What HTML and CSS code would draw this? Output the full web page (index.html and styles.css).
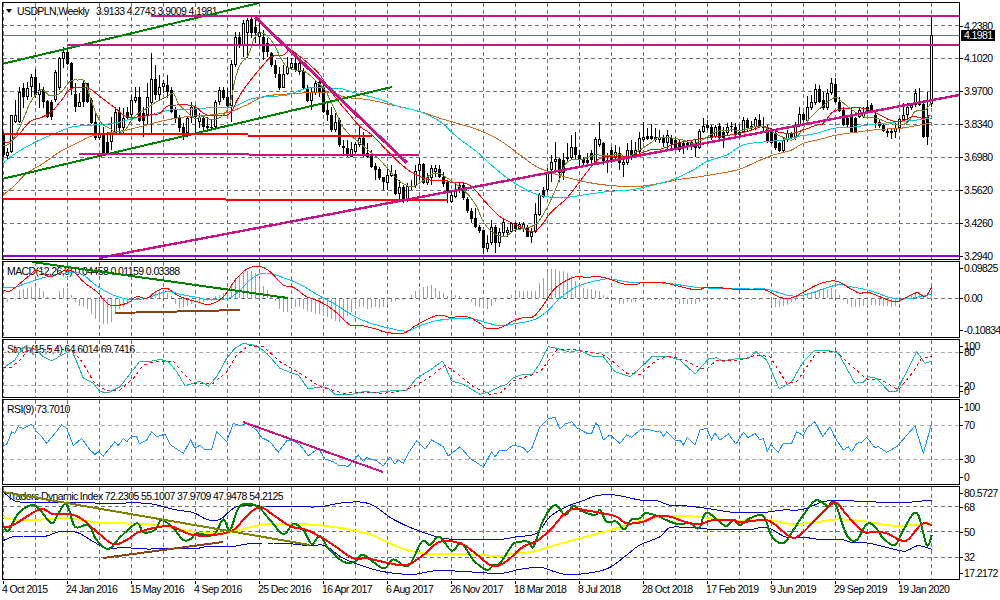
FILE: index.html
```html
<!DOCTYPE html>
<html lang="en">

<head>
    <meta charset="utf-8">
    <title>USDPLN,Weekly</title>
    <link rel="stylesheet" href="styles.css">
</head>

<body>
    <div id="chart">
        <div class="pane" id="main-pane">
            <div class="plot">
                <div class="legend legend-main"><span class="arrow"></span><span>USDPLN,Weekly</span><span class="ohlc">3.9133 4.2743 3.9009 4.1981</span></div>
                <svg id="main"></svg>
            </div>
            <div class="axis" id="main-axis"></div>
        </div>
        <div class="pane" id="macd-pane">
            <div class="plot">
                <div class="legend">MACD(12,26,9) 0.04458 0.01159 0.03388</div>
                <svg id="macd"></svg>
            </div>
            <div class="axis" id="macd-axis"></div>
        </div>
        <div class="pane" id="stoch-pane">
            <div class="plot">
                <div class="legend">Stoch(15,5,4) 64.6014 69.7416</div>
                <svg id="stoch"></svg>
            </div>
            <div class="axis" id="stoch-axis"></div>
        </div>
        <div class="pane" id="rsi-pane">
            <div class="plot">
                <div class="legend">RSI(9) 73.7010</div>
                <svg id="rsi"></svg>
            </div>
            <div class="axis" id="rsi-axis"></div>
        </div>
        <div class="pane" id="tdi-pane">
            <div class="plot">
                <div class="legend">Traders Dynamic Index 72.2305 55.1007 37.9709 47.9478 54.2125</div>
                <svg id="tdi"></svg>
            </div>
            <div class="axis" id="tdi-axis"></div>
        </div>
        <div id="dates">
            <span class="date">4 Oct 2015</span>
            <span class="date">24 Jan 2016</span>
            <span class="date">15 May 2016</span>
            <span class="date">4 Sep 2016</span>
            <span class="date">25 Dec 2016</span>
            <span class="date">16 Apr 2017</span>
            <span class="date">6 Aug 2017</span>
            <span class="date">26 Nov 2017</span>
            <span class="date">18 Mar 2018</span>
            <span class="date">8 Jul 2018</span>
            <span class="date">28 Oct 2018</span>
            <span class="date">17 Feb 2019</span>
            <span class="date">9 Jun 2019</span>
            <span class="date">29 Sep 2019</span>
            <span class="date">19 Jan 2020</span>
        </div>
    </div>

    <script src="chart.js"></script>
</body>

</html>
```

FILE: styles.css
```css
html,
body {
    width: 100%;
    height: 100%;
    margin: 0;
    padding: 0;
    background: #fff;
}

#chart {
    display: flex;
    flex-direction: column;
    gap: 1px;
    padding: 2px 0 0 2px;
    font-family: "Liberation Sans", Arial, sans-serif;
    font-size: 10.5px;
    letter-spacing: -0.6px;
    color: #000;
}

.pane {
    display: flex;
}

#main-pane {
    height: 258px;
}

#macd-pane {
    height: 77px;
}

#stoch-pane {
    height: 59px;
}

#rsi-pane {
    height: 86px;
}

#tdi-pane {
    height: 94px;
}

.plot {
    position: relative;
    box-sizing: border-box;
    width: 958px;
    height: 100%;
    border: 1px solid #000;
    overflow: hidden;
}

.plot svg {
    display: block;
    position: relative;
    z-index: 1;
    width: 100%;
    height: 100%;
    shape-rendering: crispEdges;
}

.legend {
    position: absolute;
    top: 3px;
    left: 4px;
    line-height: 12px;
    white-space: nowrap;
}

.legend-main {
    display: flex;
    align-items: center;
    top: 2px;
}

.arrow {
    width: 0;
    height: 0;
    margin: 0 5px 0 -1px;
    border-style: solid;
    border-width: 4px 3.5px 0 3.5px;
    border-color: #000 transparent transparent transparent;
}

.ohlc {
    margin-left: 7px;
}

.axis {
    position: relative;
    flex: 1;
}

.tick {
    position: absolute;
    left: 4px;
    line-height: 10px;
    white-space: nowrap;
}

.tick::before {
    content: "";
    position: absolute;
    top: 5px;
    left: -4px;
    width: 3px;
    height: 1px;
    background: #000;
}

.tick.current {
    left: 1px;
    padding: 0 2px 0 3px;
    line-height: 11px;
    background: #000;
    color: #fff;
}

.tick.current::before {
    display: none;
}

#dates {
    display: flex;
}

.date {
    flex: 0 0 64px;
    line-height: 11px;
    white-space: nowrap;
}

.date::before {
    content: "";
    display: block;
    width: 1px;
    height: 3px;
    margin-left: 1px;
    background: #000;
}
```

FILE: chart.js
```js
// all chart data was read off at 3x, so [x, y] pairs are in 1/3 px from a crop origin
const NS = "http://www.w3.org/2000/svg";
const STEP = 4;
const FIRST_X = 3;

const GRID = "#667788";
const LEVEL = "#a9a9a9";
const GREEN = "#008000";
const MAGENTA = "#c71585";
const RED = "#ff0000";
const BROWN = "#8b4513";

function crop(ox, oy, flat) {
    const out = [];
    for (let i = 0; i < flat.length; i += 2) {
        out.push([ox + flat[i] / 3, oy + flat[i + 1] / 3]);
    }
    return out;
}

// catmull-rom through the read-off points, the averages are not angular
function smooth(pts) {
    const out = [];
    for (let i = 0; i < pts.length - 1; i++) {
        const p0 = pts[Math.max(i - 1, 0)];
        const p1 = pts[i];
        const p2 = pts[i + 1];
        const p3 = pts[Math.min(i + 2, pts.length - 1)];
        for (let s = 0; s < 6; s++) {
            const t = s / 6;
            out.push([0, 1].map(n => 0.5 * (2 * p1[n] + (p2[n] - p0[n]) * t
                + (2 * p0[n] - 5 * p1[n] + 4 * p2[n] - p3[n]) * t * t
                + (3 * p1[n] - p0[n] - 3 * p2[n] + p3[n]) * t * t * t)));
        }
    }
    out.push(pts[pts.length - 1]);
    return out;
}

function el(parent, name, attrs) {
    const node = document.createElementNS(NS, name);
    for (const key in attrs) {
        node.setAttribute(key, attrs[key]);
    }
    parent.appendChild(node);
    return node;
}

function line(svg, color, width, pts, dash) {
    const attrs = {
        points: pts.map(p => p[0].toFixed(1) + "," + p[1].toFixed(1)).join(" "),
        fill: "none",
        stroke: color,
        "stroke-width": width,
    };
    if (dash) {
        attrs["stroke-dasharray"] = dash;
    }
    el(svg, "polyline", attrs);
}

// svg units are page pixels, whatever pane it is
function setup(id, levels, levelColor) {
    const svg = document.getElementById(id);
    const box = svg.getBoundingClientRect();
    svg.setAttribute("viewBox", box.x + " " + box.y + " " + box.width + " " + box.height);

    for (let x = FIRST_X; x < 950; x += 32) {
        line(svg, GRID, 1, [[x + 0.5, box.y], [x + 0.5, box.bottom]], "4 3");
    }
    const axis = document.getElementById(id + "-axis");
    const axisTop = axis.getBoundingClientRect().y;
    levels.forEach(level => {
        if (level[2] !== false) {
            const y = Math.floor(level[1]) + 0.5;
            line(svg, levelColor, 1, [[box.x, y], [box.right, y]], "4 3");
        }
        const tick = document.createElement("div");
        tick.className = "tick";
        tick.textContent = level[0];
        tick.style.top = (level[1] - axisTop - 5) + "px";
        axis.appendChild(tick);
    });
    return svg;
}

/* ---- main pane ---- */

// high, body top, body bottom, low, white body
const CANDLES = [
    [395,400,465,470,0],[445,455,468,480,1],[345,345,455,460,1],[300,345,365,370,1],
    [260,275,365,370,1],[250,265,292,325,0],[245,265,292,300,1],[222,232,262,290,1],
    [208,232,285,295,0],[250,270,285,325,1],[262,270,305,325,0],[300,303,352,355,0],
    [300,305,350,360,0],[210,215,300,305,1],[170,175,265,270,1],[140,155,178,205,1],
    [145,155,192,195,0],[185,190,265,285,0],[250,282,320,335,0],[280,305,320,320,1],
    [240,250,305,320,0],[250,250,305,310,0],[295,300,370,372,0],[335,365,415,420,0],
    [370,398,415,420,1],[380,398,458,460,0],[395,425,458,460,0],[350,400,425,450,1],
    [320,335,400,405,1],[320,335,385,405,0],[325,355,385,405,1],[320,335,355,360,0],
    [285,300,345,350,1],[262,290,302,310,1],[260,290,362,365,0],[320,340,362,410,0],
    [250,290,345,375,1],[160,238,310,400,1],[195,238,285,300,0],[225,262,285,300,1],
    [240,250,262,280,1],[225,255,275,295,0],[260,270,335,340,0],[320,330,358,370,0],
    [345,355,385,395,0],[370,380,400,420,0],[350,355,400,410,1],[305,320,355,370,1],
    [315,320,350,400,0],[340,350,365,385,1],[345,355,380,395,0],[350,378,385,395,0],
    [360,380,385,390,1],[300,305,380,385,1],[260,270,305,315,1],[260,270,295,300,0],
    [265,292,318,330,0],[180,192,318,365,1],[95,110,195,200,1],[95,110,135,145,0],
    [60,68,135,170,1],[55,60,100,175,1],[50,58,100,115,0],[55,80,100,130,0],
    [70,95,112,135,1],[90,112,155,180,0],[115,130,155,170,0],[155,160,195,200,0],
    [180,195,222,235,0],[200,222,265,270,0],[195,222,265,265,1],[170,200,222,225,1],
    [175,190,205,210,1],[175,190,210,215,0],[180,190,215,225,1],[205,212,265,270,0],
    [255,265,302,305,0],[265,275,302,330,1],[240,250,280,285,1],[230,245,280,290,0],
    [250,262,335,340,0],[305,330,345,362,0],
    [320,345,390,395,0],[340,365,390,395,1],[355,360,435,440,0],[420,438,445,465,0],
    [420,445,465,470,0],[425,447,470,472,1],[425,432,455,460,1],[380,415,435,440,1],
    [395,415,465,470,0],[430,458,472,475,0],[450,462,500,505,0],[490,498,510,540,0],
    [500,507,535,540,0],[530,532,545,570,0],[505,525,548,570,1],[495,518,528,530,1],
    [510,522,582,585,0],[540,562,582,600,1],[555,560,600,608,0],[550,557,600,605,1],
    [540,558,562,570,0],[495,512,558,565,1],[475,492,512,540,1],[490,492,550,552,0],
    [520,530,548,555,1],[495,505,535,555,1],[495,505,515,530,1],[495,508,530,535,0],
    [515,530,552,560,0],[540,545,580,610,0],[570,585,605,608,1],[545,570,590,595,1],
    [550,555,570,580,0],[550,555,595,600,0],[590,597,632,640,0],[625,632,657,670,0],
    [625,655,682,685,0],[675,682,692,700,0],[690,690,745,762,0],[705,730,748,755,1],
    [660,680,730,735,1],[675,680,730,758,0],[685,695,730,740,1],[655,665,700,710,1],
    [680,690,700,710,1],[665,670,695,700,1],[665,670,688,695,0],[665,672,688,690,1],
    [665,672,688,695,1],[675,685,710,712,0],[685,695,710,730,1],[610,642,695,700,1],
    [580,585,645,648,1],[560,570,590,595,0],[505,520,570,575,1],[465,485,510,545,1],
    [425,478,485,515,1],[475,478,520,545,0],[460,480,520,540,0],[430,470,478,482,1],
    [405,440,475,480,1],[395,440,465,480,0],[450,465,478,500,0],[470,478,490,495,0],
    [460,480,490,495,0],[450,460,480,490,0],[410,418,490,495,1],[367,418,435,440,1],
    [425,430,488,495,0],[460,480,490,520,0],[440,450,480,490,0],[435,455,475,480,1],
    [440,460,490,510,0],[470,485,495,530,1],[430,450,490,495,1],[420,450,470,480,0],
    [425,450,465,470,1],[395,415,455,465,1],[367,410,420,425,1],[385,408,418,420,0],
    [372,408,418,420,0],[385,410,420,425,0],[390,410,420,430,1],
    [405,415,430,440,0],[390,405,430,450,1],[405,415,432,445,0],[410,420,445,450,0],
    [420,430,450,455,0],[425,430,445,462,0],[420,430,440,450,0],[420,425,440,450,1],
    [420,430,445,470,0],[388,392,445,448,1],[355,378,395,400,1],[360,375,383,390,0],
    [375,380,415,420,0],[375,380,410,415,1],[370,378,415,420,0],[380,395,415,445,0],
    [368,380,400,405,1],[365,378,382,395,1],[370,380,405,415,0],[375,395,405,415,1],
    [350,360,395,400,1],[355,360,385,395,0],[362,378,385,392,1],[350,358,380,390,1],
    [342,360,380,385,0],[350,378,385,395,0],[375,385,425,430,0],[385,392,430,432,0],
    [395,400,445,450,0],[425,430,452,455,0],[415,420,452,455,1],[390,400,420,425,1],
    [395,400,415,418,0],[365,375,415,420,1],[322,342,375,380,1],[335,342,360,365,0],
    [288,320,362,365,1],[285,305,325,330,1],[252,268,310,315,1],[255,268,305,310,0],
    [275,300,325,330,0],[268,278,325,330,1],[235,250,280,285,1],[235,252,305,310,0],
    [290,305,332,335,0],[322,330,375,378,0],[350,355,375,380,0],[320,345,398,400,0],
    [350,355,398,400,0],[320,330,350,355,1],[320,340,350,355,1],[300,320,332,340,0],
    [310,315,335,340,0],[335,345,370,385,0],[360,365,378,385,0],[370,375,392,395,0],
    [385,392,400,410,0],[385,392,400,418,1],[365,385,395,415,1],[355,358,385,395,1],
    [310,345,360,365,1],[310,322,345,365,1],[310,315,325,330,1],[268,280,315,320,1],
    [265,305,315,318,0],[305,312,412,415,0],[275,350,412,435,0],[48,105,312,320,1],
];

function drawCandles(svg) {
    CANDLES.forEach((c, k) => {
        const x = FIRST_X + STEP * k;
        const [high, top, bottom, low] = c.slice(0, 4).map(v => Math.round(v / 3));
        el(svg, "rect", { x: x, y: high, width: 1, height: low - high, fill: "#000" });
        el(svg, "rect", { x: x - 1, y: top, width: 3, height: Math.max(bottom - top, 1), fill: "#000" });
        if (c[4] && bottom - top > 2) {
            el(svg, "rect", { x: x, y: top + 1, width: 1, height: bottom - top - 2, fill: "#fff" });
        }
    });
}

const main = setup("main", [
    ["4.2380", 25.7], ["4.1020", 58.3], ["3.9700", 91.3], ["3.8340", 124.3],
    ["3.6980", 157.3], ["3.5620", 190.3], ["3.4260", 223.3], ["3.2940", 256],
], GRID);

line(main, GRID, 1, [[2, 35.5], [960, 35.5]]);
drawCandles(main);

line(main, "#d2691e", 1, smooth(crop(0, 0, [9,585,40,560,80,520,130,490,180,455,230,430,270,410,320,400,380,390,440,375,500,360,560,350,630,345,690,335,740,315,790,290,860,282,930,278,990,278])
    .concat(crop(330, 0, [50,292,120,300,200,318,270,335,340,358,410,378,470,400,520,428,570,465,620,500,670,520,720,535,790,550,850,557,920,560,990,550]))
    .concat(crop(660, 0, [60,538,120,530,230,510,290,485,340,465,390,452,430,430,480,418,530,405,600,395,660,388,720,385,780,375,813,368]))));
line(main, "#00ced1", 1, smooth(crop(0, 0, [9,490,40,465,80,440,130,415,190,390,220,380,280,375,340,370,400,355,450,345,510,330,570,328,640,322,700,320,750,298,800,290,860,285,920,265,970,262,990,265])
    .concat(crop(330, 0, [30,265,80,280,150,298,200,318,270,335,330,365,380,410,440,455,490,500,540,540,600,575,650,590,700,593,760,585,830,575,900,570,950,560,990,550]))
    .concat(crop(660, 0, [40,538,100,510,140,485,200,465,250,435,320,425,370,420,410,410,470,400,520,385,570,382,650,372,720,365,770,360,813,355]))));
line(main, RED, 1, smooth(crop(0, 0, [9,425,30,425,60,400,90,365,130,350,160,330,185,300,215,265,265,265,300,290,340,320,380,350,420,350,450,345,480,340,500,320,530,315,580,318,620,345,660,345,690,340,720,285,760,230,790,195,815,170,850,165,870,150,900,170,930,195,960,225,990,270])
    .concat(crop(330, 0, [30,310,60,345,90,380,120,400,150,430,180,460,210,490,250,520,300,540,345,542,370,548,400,548,430,565,470,610,510,650,545,668,580,685,610,695,635,675,665,635,710,595,745,550,780,505,810,475,850,468,900,470,960,450,990,448]))
    .concat(crop(660, 0, [50,430,100,420,150,412,210,405,260,395,310,380,350,395,395,400,430,390,470,375,490,370,520,335,560,325,610,325,650,340,690,360,720,365,760,350,790,355,810,345]))));
line(main, "#6b8e23", 1, smooth(crop(0, 0, [9,435,30,430,60,380,90,310,115,275,130,270,150,287,180,280,210,245,235,240,255,245,270,290,290,345,310,375,330,385,350,400,375,390,395,360,415,340,440,325,470,305,500,290,520,280,535,310,560,335,585,355,610,350,640,360,670,345,690,310,705,240,720,195,745,165,765,110,790,100,820,130,840,170,860,200,885,210,915,215,945,240,975,270,990,300])
    .concat(crop(330, 0, [15,330,35,375,60,405,85,425,120,455,150,480,185,520,210,545,245,560,275,545,300,525,325,520,345,530,375,550,400,570,420,590,440,620,460,665,485,695,510,708,530,708,555,690,585,685,620,670,650,625,680,560,705,495,730,478,760,478,795,465,830,468,870,462,885,475,915,460,960,430,990,412]))
    .concat(crop(660, 0, [60,418,100,430,125,420,170,395,210,390,250,390,300,378,335,395,365,410,395,420,420,400,445,360,480,325,525,292,545,305,570,325,610,350,650,355,690,370,720,375,745,365,765,335,795,330,813,310]))));

line(main, GREEN, 2, [[2, 64], [259, 3]]);
line(main, GREEN, 2, [[2, 179], [392, 87]]);
line(main, RED, 2, [[2, 134], [248, 134]]);
line(main, RED, 2, [[248, 136], [372, 136]]);
line(main, RED, 2, [[2, 199], [226, 199]]);
line(main, RED, 2, [[226, 200], [448, 200]]);
line(main, MAGENTA, 2, [[79, 154], [249, 154]]);
line(main, MAGENTA, 2, [[249, 155], [419, 155]]);
line(main, MAGENTA, 2, [[151, 16], [960, 16]]);
line(main, MAGENTA, 2, [[67, 45], [960, 45]]);
line(main, MAGENTA, 2.4, [[99, 258], [959, 95]]);
line(main, MAGENTA, 3, [[255, 17], [407, 163]]);
line(main, "#9400d3", 2, [[2, 256], [960, 256]]);

const current = document.createElement("div");
current.className = "tick current";
current.textContent = "4.1981";
current.style.top = "28px";
document.getElementById("main-axis").appendChild(current);

/* ---- MACD ---- */

const macd = setup("macd", [
    ["0.09825", 268, false], ["0.00", 298.3], ["-0.10834", 330, false],
], GRID);

const HIST = [
    -20,-10,-3,-2,25,28,30,32,35,30,22,3,0,0,20,30,30,10,-10,-20,-25,-30,-45,-60,-65,-75,-75,-70,-45,-30,
    -25,-15,-8,-3,-3,-4,0,10,20,25,22,15,5,-15,-28,-25,-20,-15,-12,-8,-8,-5,-5,5,10,15,15,40,60,70,
    75,80,80,75,60,35,25,8,-5,-30,-38,-38,-30,-25,-25,-30,-35,-40,-45,-45,-50,-55,-60,-65,-70,-60,-50,-40,-30,-25,
    -25,-30,-28,-25,-28,-25,-15,-10,-5,-3,-2,0,8,22,28,32,35,38,30,20,15,5,12,10,5,0,-3,-10,-20,-25,
    -25,-30,-20,-10,0,0,2,10,15,20,22,20,22,22,45,60,80,88,88,82,80,75,65,50,40,30,28,28,25,22,
    10,3,0,-2,-15,-15,-8,-8,-8,-2,-2,-2,-2,-2,-2,-2,-2,-2,-10,-15,-15,-15,-15,-15,-10,-2,0,-2,0,-2,
    0,-2,0,-2,0,-2,0,-2,0,-2,0,0,-20,-25,-25,-22,-18,-10,-5,0,10,15,15,22,28,28,28,30,28,10,
    -3,-15,-25,-25,-25,-20,-20,-18,-18,-20,-22,-22,-25,-22,-10,-3,3,8,15,15,8,3,8,
];
const ZERO = 298;
HIST.forEach((h, k) => {
    const size = Math.round(Math.abs(h) / 3);
    if (size > 0) {
        el(macd, "rect", {
            x: FIRST_X + STEP * k,
            y: h > 0 ? ZERO - size : ZERO + 1,
            width: 1,
            height: size,
            fill: "#a0a0a0",
        });
    }
});

line(macd, "#00bfff", 1, smooth(crop(0, 255, [9,98,40,98,70,88,100,78,130,68,160,60,190,55,220,52,250,60,280,85,310,105,340,120,370,130,400,133,440,130,480,115,510,110,540,118,580,125,620,133,660,133,690,128,720,105,750,75,780,57,810,55,850,68,900,88,950,118,1000,145,1040,170,1075,190,1120,207,1170,220,1220,228,1260,212,1310,197,1370,190,1410,190,1450,200,1500,212])
    .concat(crop(500, 255, [50,205,100,195,140,170,180,130,230,95,290,77,330,72,390,82,450,82,520,87,590,97,660,100,750,102,800,103,870,122,920,118,1010,90,1050,95,1110,107,1180,130,1230,130,1295,118]))));
line(macd, RED, 1, smooth(crop(0, 255, [9,105,30,108,60,85,90,60,110,45,150,65,190,48,220,50,250,80,290,110,330,150,380,145,410,125,440,130,470,108,500,100,540,125,590,140,630,148,670,125,710,70,745,40,780,35,810,50,850,90,880,97,920,125,960,140,1000,165,1050,210,1075,210,1120,220,1160,232,1210,235,1250,210,1300,185,1330,182,1350,187,1400,185,1440,205,1460,220,1500,218])
    .concat(crop(500, 255, [40,198,70,188,100,185,130,150,165,100,220,67,260,67,295,65,330,73,375,88,410,88,430,82,490,83,530,92,590,105,620,97,680,100,720,105,790,103,840,127,880,127,950,90,1005,78,1050,100,1080,115,1105,112,1180,140,1210,132,1250,113,1275,125,1295,97]))));
line(macd, GREEN, 2, [[32, 262], [288, 298]]);
line(macd, BROWN, 2, [[115, 313], [240, 310]]);

/* ---- stochastic ---- */

const stoch = setup("stoch", [
    ["100", 346, false], ["80", 352.3], ["20", 385.7], ["0", 391, false],
], LEVEL);

line(stoch, "#20b2aa", 1, crop(0, 255, [9,340,30,325,45,315,60,290,75,275,110,285,130,305,155,318,185,300,215,285,230,320,250,370,280,385,300,410,325,413,360,395,395,350,420,318,445,320,480,313,505,320,530,350,555,392,580,385,598,378,625,393,650,365,680,310,705,280,730,265,770,272,800,295,840,340,870,352,895,360,925,402,965,395,985,400,1005,418,1060,418,1090,410,1130,412,1170,408,1220,405,1250,370,1290,345,1328,318,1355,378,1390,388,1440,418,1470,410,1500,395])
    .concat(crop(500, 255, [20,388,40,368,70,358,95,360,120,325,145,275,170,280,210,292,235,285,275,303,310,305,345,350,390,365,420,340,455,305,505,305,540,315,585,357,625,312,650,308,670,320,690,313,745,310,768,290,800,315,838,402,875,380,910,320,945,285,980,285,1015,295,1065,385,1090,382,1105,365,1130,370,1165,408,1190,408,1250,290,1275,325,1295,318])));
line(stoch, RED, 1, crop(0, 255, [9,338,35,336,60,315,90,280,120,285,170,280,220,290,250,325,280,380,320,408,360,405,400,370,430,330,470,318,520,318,545,350,580,385,640,385,680,350,710,300,745,272,790,275,840,320,900,355,960,395,1030,415,1090,412,1150,415,1210,408,1250,390,1290,365,1335,330,1370,355,1420,395,1470,418,1500,415])
    .concat(crop(500, 255, [40,378,95,360,125,345,170,285,230,283,310,300,340,320,380,355,420,358,470,315,510,303,560,318,600,340,620,342,650,315,720,315,770,300,810,305,860,385,890,380,950,292,1010,290,1040,320,1100,372,1145,375,1195,405,1240,350,1265,308,1295,305])), "3 3");

/* ---- RSI ---- */

const rsi = setup("rsi", [
    ["100", 406.7, false], ["70", 425.3], ["30", 459.3], ["0", 477, false],
], LEVEL);

line(rsi, "#1e90ff", 1, crop(0, 255, [9,575,22,565,35,530,45,535,55,515,70,520,95,508,110,530,125,545,140,565,165,535,185,510,200,520,220,572,245,550,270,585,285,598,295,590,310,603,345,560,355,572,370,550,380,560,395,543,410,545,418,567,440,555,455,530,470,545,495,538,512,570,550,595,572,555,585,580,600,570,612,583,635,583,650,530,680,560,700,505,720,512,740,505,770,525,785,548,810,560,835,592,860,557,880,558,900,570,925,603,955,580,975,612,1000,620,1015,630,1045,634,1075,600,1090,620,1100,608,1130,618,1150,632,1170,605,1185,628,1195,615,1210,625,1225,595,1250,557,1275,583,1295,555,1330,575,1345,603,1380,575,1410,610,1450,636,1475,590,1485,605,1500,585])
    .concat(crop(500, 255, [20,585,40,570,70,578,82,592,95,580,120,515,145,492,165,487,180,523,195,507,215,500,230,518,265,537,275,535,287,505,297,515,310,555,330,540,360,565,380,540,395,547,420,525,440,523,470,530,480,527,490,545,500,530,525,555,540,555,550,570,562,547,585,570,600,525,620,520,635,555,645,535,660,555,685,537,708,568,730,532,745,548,765,535,780,555,790,550,802,590,812,568,835,592,850,565,875,565,890,530,910,542,922,518,945,500,968,545,990,515,1005,548,1030,585,1045,575,1055,590,1070,565,1085,562,1100,547,1125,578,1135,575,1160,592,1190,575,1245,513,1270,595,1295,505])));
line(rsi, MAGENTA, 2, [[243, 422], [383, 472]]);

/* ---- traders dynamic index ---- */

const tdi = setup("tdi", [
    ["80.5727", 493, false], ["68", 506.7], ["50", 531.7], ["32", 557.3], ["17.2172", 573, false],
], GRID);

line(tdi, "#0000cd", 1, smooth(crop(0, 480, [9,35,40,60,70,67,150,68,250,68,320,70,440,70,520,88,580,98,620,118,660,118,710,80,780,78,900,80,960,80,1040,67,1110,72,1180,118,1250,150,1330,175,1400,178,1500,178])
    .concat(crop(500, 480, [50,170,110,160,150,110,200,80,250,62,290,47,345,45,420,60,470,62,510,76,560,78,620,85,700,97,790,97,850,90,910,88,985,62,1100,65,1200,68,1295,60]))));
line(tdi, "#0000cd", 1, smooth(crop(0, 480, [9,182,40,170,70,168,130,170,180,155,230,157,280,185,320,205,370,203,440,207,520,205,590,205,620,200,690,200,760,190,850,190,930,197,975,197,1030,235,1110,265,1170,278,1240,283,1310,272,1400,275,1500,280])
    .concat(crop(500, 480, [60,268,120,262,170,277,210,284,280,277,330,262,380,225,420,195,480,170,510,143,570,143,640,148,750,148,800,142,860,172,910,172,960,178,1020,178,1060,188,1110,190,1200,212,1225,210,1255,197,1295,208]))));
line(tdi, "#ffff00", 2, smooth(crop(0, 480, [9,110,40,118,100,120,200,115,300,128,450,133,540,148,600,158,680,158,790,133,870,132,980,138,1100,160,1170,190,1220,210,1290,222,1380,222,1500,228])
    .concat(crop(500, 480, [30,222,100,215,140,203,240,175,340,148,410,125,480,110,540,107,620,113,700,122,800,120,880,132,960,125,1015,118,1100,125,1180,137,1295,132]))));
line(tdi, GREEN, 2, smooth(crop(0, 480, [9,135,25,152,55,100,95,75,120,90,155,130,175,100,200,72,225,140,265,135,290,180,325,207,360,172,410,130,430,157,465,150,485,120,520,145,550,180,575,175,590,160,640,165,670,118,690,150,720,78,770,78,810,120,850,162,880,132,910,150,935,192,960,168,985,205,1030,245,1065,245,1090,225,1150,265,1180,238,1225,258,1265,185,1290,195,1318,170,1355,212,1385,190,1420,240,1460,270,1480,255,1500,250])
    .concat(crop(500, 480, [30,205,45,188,85,185,100,200,130,120,165,75,195,105,220,78,245,93,285,105,300,90,320,125,350,125,372,148,395,118,420,115,435,100,470,107,510,125,540,132,570,130,597,145,620,98,675,137,700,120,720,135,750,115,790,108,815,168,850,190,880,150,910,105,945,62,970,70,985,78,1005,70,1040,165,1070,180,1100,132,1125,140,1150,175,1185,195,1210,150,1250,98,1280,195,1295,165]))));
line(tdi, RED, 2, smooth(crop(0, 480, [9,140,40,135,120,88,160,103,210,102,250,120,290,155,340,192,380,180,420,155,500,138,540,150,580,165,640,165,700,150,740,108,780,82,820,105,870,138,920,150,960,170,1000,195,1060,235,1100,235,1170,250,1220,255,1270,225,1320,185,1380,190,1420,215,1470,255,1500,255])
    .concat(crop(500, 480, [30,235,70,200,110,183,150,150,190,105,220,87,270,93,310,100,350,110,380,130,430,125,470,108,510,110,560,127,600,132,640,120,700,120,720,127,790,120,820,130,870,170,900,165,960,105,1005,68,1040,105,1090,155,1120,155,1160,160,1200,180,1225,178,1265,132,1295,135]))));
line(tdi, "#808000", 2, [[3, 492], [310, 545]]);
line(tdi, BROWN, 2, [[103, 558], [223, 542]]);
```
